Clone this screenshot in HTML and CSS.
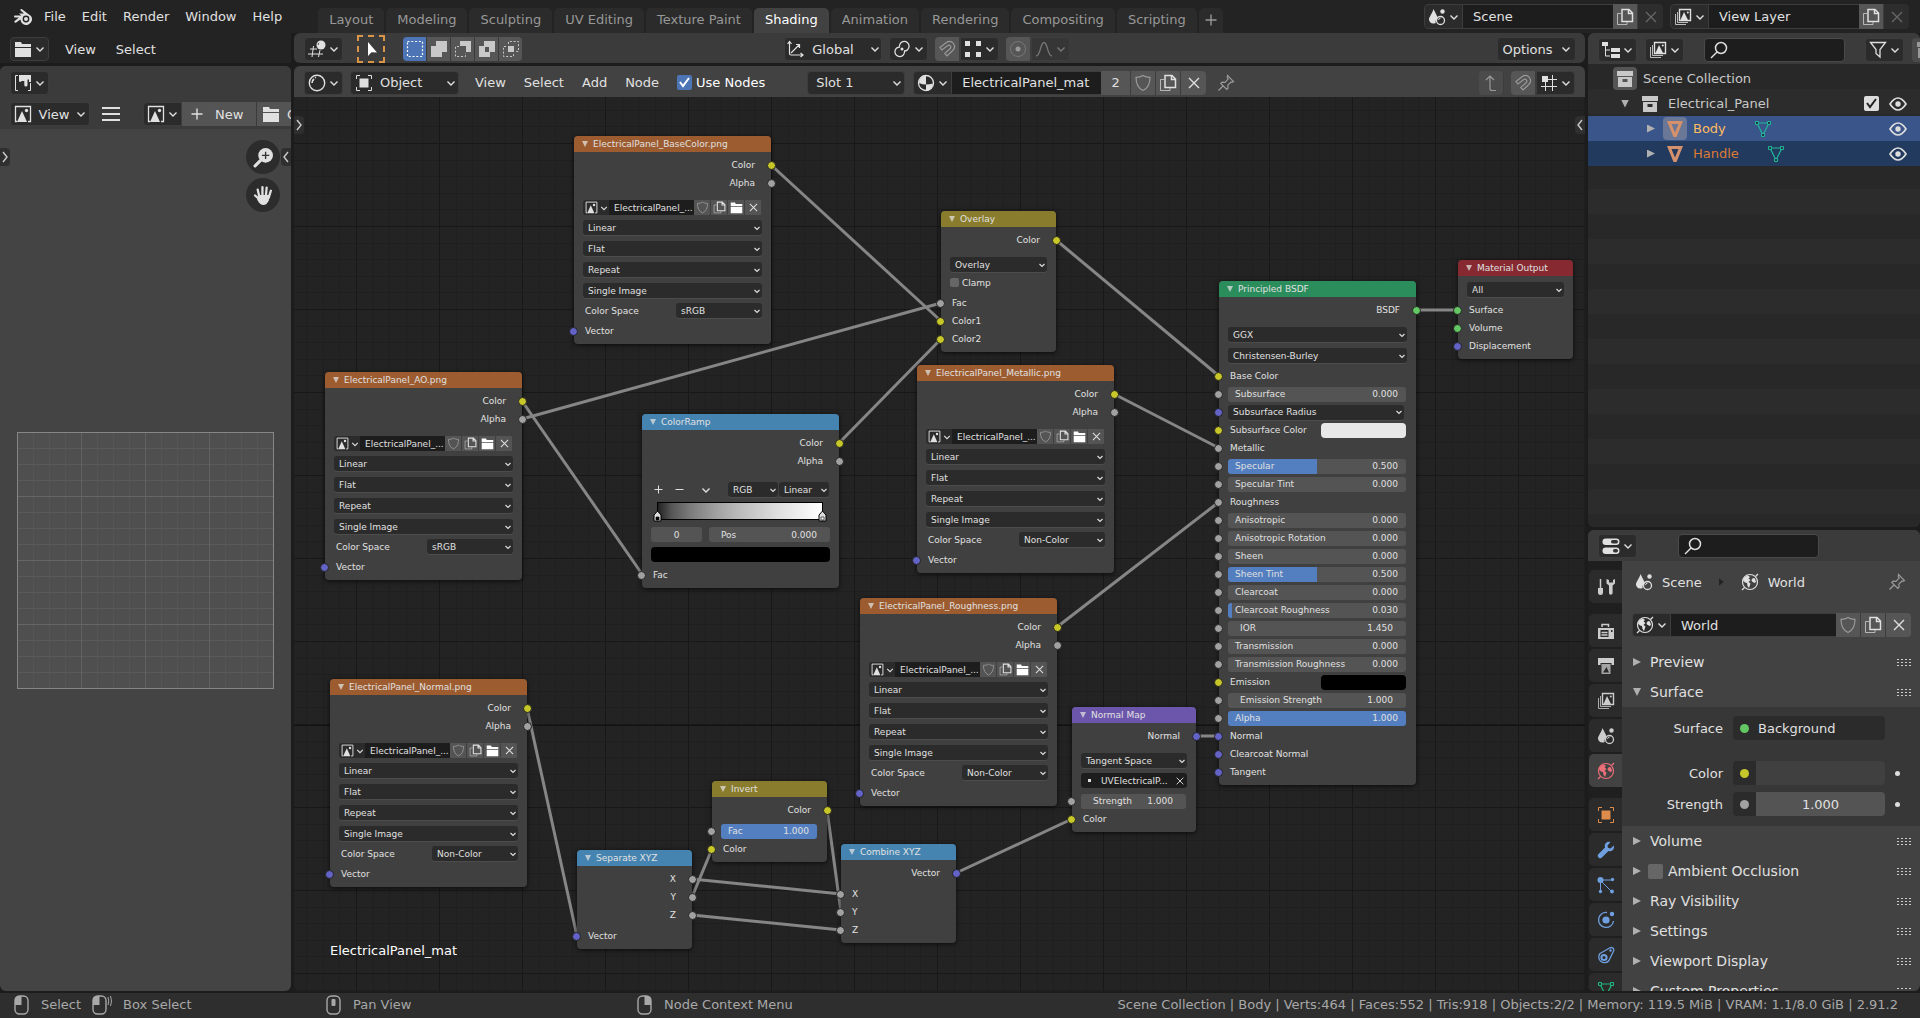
FILE: index.html
```html
<!DOCTYPE html>
<html lang="en">
<head>
    <meta charset="UTF-8">
    <meta name="viewport" content="width=device-width, initial-scale=1.0">
    <title>Blender</title>
    <link rel="stylesheet" href="styles.css">
</head>

<body>
    <!-- Icon set -->
    <svg class="sprite" aria-hidden="true">
        <symbol id="i-logo" viewBox="0 0 20 18"><path d="M9 1.2 18 8a5.800 5.800 0 1 1-10.600 3.500L3.200 14.500c-1.600.8-2.600-.6-1.500-1.600L6 9.500H2.200c-1.600 0-1.600-2 0-2h6.300L5.900 5.400H11L7.800 2.800C6.800 1.800 8 .6 9 1.200z" fill="currentColor"/><circle cx="13" cy="11" r="3.400" fill="#232323"/><circle cx="13" cy="11" r="2" fill="currentColor"/></symbol>
        <symbol id="i-folder" viewBox="0 0 18 18"><path d="M1 2h6l1 2h9v3H1zM1 8h16v9H1z" fill="currentColor"/></symbol>
        <symbol id="i-paint" viewBox="0 0 18 18"><path d="M4 1.500H1.500v15H4M14 16.500h2.500V9" fill="none" stroke="currentColor"/><path d="M5 1h12v7h-2V5.500h-1.500V11a1.600 1.600 0 0 1-3.200 0V7H7.500a1.300 1.300 0 0 1-2.500 0z" fill="currentColor"/></symbol>
        <symbol id="i-image" viewBox="0 0 18 18"><path d="M3 16.500H1.500v-15h15v15H14" fill="none" stroke="currentColor" stroke-width="1.300"/><path d="M3 17 8 6l5 11z" fill="currentColor"/><circle cx="12.500" cy="5.500" r="1.700" fill="currentColor"/></symbol>
        <symbol id="i-menu" viewBox="0 0 18 18"><path d="M0 3h18M0 9h18M0 15h18" stroke="currentColor" stroke-width="2"/></symbol>
        <symbol id="i-plus" viewBox="0 0 18 18"><path d="M9 3.500v11M3.500 9h11" stroke="currentColor" stroke-width="1.400"/></symbol>
        <symbol id="i-minus" viewBox="0 0 18 18"><path d="M3.500 9h11" stroke="currentColor" stroke-width="1.400"/></symbol>
        <symbol id="i-x" viewBox="0 0 18 18"><path d="m4 4 10 10m0-10-10 10" stroke="currentColor" stroke-width="1.400"/></symbol>
        <symbol id="i-chev" viewBox="0 0 10 10"><path d="m1.500 3.500 3.500 3.500 3.500-3.500" fill="none" stroke="currentColor" stroke-width="1.400"/></symbol>
        <symbol id="i-left" viewBox="0 0 10 16"><path d="M7 3 3 8l4 5" fill="none" stroke="currentColor" stroke-width="1.400"/></symbol>
        <symbol id="i-right" viewBox="0 0 10 16"><path d="m3 3 4 5-4 5" fill="none" stroke="currentColor" stroke-width="1.400"/></symbol>
        <symbol id="i-view3d" viewBox="0 0 18 18"><path d="M5.500 6 4 17M12 10l-1.500 7M2 9h7M0 14h15" fill="none" stroke="currentColor"/><circle cx="13" cy="5" r="4.500" fill="currentColor"/><path d="M11 2.800a2.500 2.500 0 0 0-.8 2" stroke="#333" fill="none"/></symbol>
        <symbol id="i-cursor" viewBox="0 0 18 18"><path d="M6 2v14l3.500-3.700 5.500.2z" fill="currentColor"/></symbol>
        <symbol id="i-set" viewBox="0 0 18 18"><path d="M1.500 1.500h15v15h-15z" fill="none" stroke="currentColor" stroke-width="1.200" stroke-dasharray="2 1.800"/></symbol>
        <symbol id="i-extend" viewBox="0 0 18 18"><path d="M6 1h11v11h-5v5H1V6h5z" fill="currentColor"/></symbol>
        <symbol id="i-subtract" viewBox="0 0 18 18"><path d="M6 1h11v11h-5V6H6z" fill="currentColor"/><path d="M5 6.500H1.500v10h10V13" fill="none" stroke="currentColor" stroke-dasharray="2 1.800"/></symbol>
        <symbol id="i-invert" viewBox="0 0 18 18"><path d="M6 1h11v11h-5v5H1V6h5zM7 7v5h4V7z" fill="currentColor" fill-rule="evenodd"/></symbol>
        <symbol id="i-intersect" viewBox="0 0 18 18"><path d="M6 6h6v6H6z" fill="currentColor"/><path d="M6.500 4V1.500h10v10H14M4 6.500H1.500v10h10V14" fill="none" stroke="currentColor" stroke-dasharray="2 1.800"/></symbol>
        <symbol id="i-axes" viewBox="0 0 18 18"><path d="M3.500 1.500v12a1.500 1.500 0 0 0 1.500 1.500h12M1.500 4l2-2.500 2 2.500M14.500 13l2.500 2-2.500 2M5 13l8.500-8.500M10 4.500h3.500V8" fill="none" stroke="currentColor" stroke-width="1.200"/></symbol>
        <symbol id="i-pivot" viewBox="0 0 18 18"><path d="M6.500 6.800A4.800 4.800 0 1 1 11 11M11.500 11.200A4.800 4.800 0 1 1 7 7" fill="none" stroke="currentColor" stroke-width="1.300"/><circle cx="9" cy="9" r="1.500" fill="currentColor"/></symbol>
        <symbol id="i-magnet" viewBox="0 0 18 18"><path d="M2 7.500 8 2.800c6-4 11.500 3.200 6.500 8L9 16l-2.200-2.500 5.200-4.700c2-2-.3-4.700-2.500-3L4 10z" fill="none" stroke="currentColor" stroke-width="1.200"/></symbol>
        <symbol id="i-incr" viewBox="0 0 18 18"><path d="M1 1h5v5H1zM12 1h5v5h-5zM1 12h5v5H1zM12 12h5v5h-5z" fill="currentColor"/></symbol>
        <symbol id="i-prop" viewBox="0 0 18 18"><circle cx="9" cy="9" r="7.500" fill="none" stroke="currentColor" opacity=".5"/><circle cx="9" cy="9" r="2.500" fill="currentColor"/></symbol>
        <symbol id="i-falloff" viewBox="0 0 18 18"><path d="M1 16c5 0 4-13.500 8-13.500S12 16 17 16" fill="none" stroke="currentColor" stroke-width="1.300"/></symbol>
        <symbol id="i-matball" viewBox="0 0 18 18"><circle cx="9" cy="9" r="7.700" fill="none" stroke="currentColor" stroke-width="1.400"/><path d="M4 9a5 5 0 0 1 2-4M7 3.800l1-.4" stroke="currentColor" stroke-width="1.600" fill="none"/></symbol>
        <symbol id="i-object" viewBox="0 0 18 18"><path d="M4.500 4.500h9v9h-9z" fill="currentColor"/><path d="M1.500 5V1.500H5M13 1.500h3.500V5M16.500 13v3.500H13M5 16.500H1.500V13" fill="none" stroke="currentColor"/></symbol>
        <symbol id="i-material" viewBox="0 0 18 18"><circle cx="9" cy="9" r="7.500" fill="none" stroke="currentColor" stroke-width="1.300"/><path d="M9 1.500A7.500 7.500 0 0 0 2 9q3.500 1.500 7 1.500zM9 10.500V17a7.500 7.500 0 0 0 7-7.500q-3 1-7 1z" fill="currentColor"/></symbol>
        <symbol id="i-shield" viewBox="0 0 18 18"><path d="M9 1.500c2 1.400 4.500 1.800 7 1.800 0 6.500-2 11-7 13.200C4 14.300 2 9.800 2 3.300c2.500 0 5-.4 7-1.800z" fill="none" stroke="currentColor" stroke-width="1.200"/></symbol>
        <symbol id="i-copy" viewBox="0 0 18 18"><path d="M5 5.500H1.500v11h9.500V14" fill="none" stroke="currentColor" opacity=".7"/><path d="M6 1.500h7L16.500 5v8.500H6zM12.500 1.500v4h4" fill="none" stroke="currentColor" stroke-width="1.500"/></symbol>
        <symbol id="i-pin" viewBox="0 0 18 18"><path d="m10.500 1.500 6 6-1.500.8-1-.3-3.200 3.200.2 3-1.200 1.200-6-6 1.200-1.200 3 .2L11.200 5l-.9-1.500zM6.500 11.500l-5 5" fill="none" stroke="currentColor" stroke-width="1.200"/></symbol>
        <symbol id="i-up" viewBox="0 0 18 18"><path d="M8 2v12.500a2 2 0 0 0 2 2h4M4 6l4-4 4 4" fill="none" stroke="currentColor" stroke-width="1.200"/></symbol>
        <symbol id="i-snapgrid" viewBox="0 0 18 18"><path d="M5.500 8v9M12.500 1v16M8 5.500h9M1 12.500h16" stroke="currentColor"/><path d="M2 2h6v6H2z" fill="currentColor"/></symbol>
        <symbol id="i-scene" viewBox="0 0 18 18"><path d="M5.500 1 10 10c-2 1-2.800 3-2.300 5C4 16.500 1 14.500 1 11.500 1 9 4.500 5 5.500 1z" fill="currentColor"/><circle cx="14.500" cy="3.500" r="2.200" fill="currentColor"/><circle cx="12.500" cy="12.500" r="4" fill="none" stroke="currentColor" stroke-width="1.300"/><path d="M10.500 12a2 2 0 0 1 2-1.800" stroke="currentColor" fill="none"/></symbol>
        <symbol id="i-layers" viewBox="0 0 18 18"><path d="M5.500 1.500h11v11h-11z" fill="none" stroke="currentColor" stroke-width="1.400"/><path d="m6.500 12 3.500-8 4 8z" fill="currentColor"/><circle cx="13.800" cy="4.500" r="1" fill="currentColor"/><path d="M3.500 4v10.500H14M1.500 6v10.500H12" fill="none" stroke="currentColor" opacity=".8"/></symbol>
        <symbol id="i-outliner" viewBox="0 0 18 18"><path d="M0 1h6v4H0zM9 7h9v4H9zM9 13h9v4H9z" fill="currentColor"/><path d="M3.500 5v10H8M3.500 9H8" fill="none" stroke="currentColor"/></symbol>
        <symbol id="i-search" viewBox="0 0 18 18"><circle cx="11" cy="7" r="5.500" fill="none" stroke="currentColor" stroke-width="1.500"/><path d="m7 11-6 6" stroke="currentColor" stroke-width="1.500"/></symbol>
        <symbol id="i-filter" viewBox="0 0 18 18"><path d="M1.500 1.500h15l-5.500 7V16l-4-3.500v-4z" fill="none" stroke="currentColor" stroke-width="1.300"/></symbol>
        <symbol id="i-collection" viewBox="0 0 18 18"><path d="M1 1h16v5H1z" fill="currentColor"/><path fill-rule="evenodd" d="M2 7h14v10H2zM6.500 9v3h5V9z" fill="currentColor"/></symbol>
        <symbol id="i-eye" viewBox="0 0 18 18"><path d="M1 9q8-12 16 0-8 12-16 0z" fill="none" stroke="currentColor" stroke-width="1.700"/><circle cx="9" cy="9" r="2.700" fill="currentColor"/></symbol>
        <symbol id="i-mesh" viewBox="0 0 18 18"><path fill-rule="evenodd" d="M1 1h16l-6.500 16h-3zM5.500 4 9 12.500 12.500 4z" fill="currentColor"/></symbol>
        <symbol id="i-meshdata" viewBox="0 0 18 18"><path d="M3 3h12L9 15z" fill="none" stroke="currentColor" stroke-width="1.200"/><path d="M1.500 1.500h3v3h-3zM13.500 1.500h3v3h-3zM7.500 13.500h3v3h-3z" fill="#234" stroke="currentColor"/></symbol>
        <symbol id="i-props" viewBox="0 0 18 18"><rect x=".5" y="1.500" width="17" height="6.500" rx="3.200" fill="currentColor"/><rect x=".5" y="10.500" width="17" height="6.500" rx="3.200" fill="currentColor"/><rect x="9" y="3" width="7" height="3.500" rx="1.700" fill="#333"/><rect x="11" y="12" width="5" height="3.500" rx="1.700" fill="#333"/></symbol>
        <symbol id="i-tool" viewBox="0 0 18 18"><path d="M3.500 1v9" stroke="currentColor" stroke-width="1.500"/><path d="M1 10h5v5q0 2-2.500 2T1 15zM9.500 1v4.500l2.500 2V15a1.800 1.800 0 0 0 3.600 0V7.500l2.400-2V1l-2 1v2.500h-4V2z" fill="currentColor"/></symbol>
        <symbol id="i-render" viewBox="0 0 18 18"><path fill-rule="evenodd" d="M1 6h16v11H1zM3.500 8v7h8V8zM14 8v2h1.500V8z" fill="currentColor"/><path d="M5 5V2.500h6.500V5M4.500 10.500h6M4.500 13h6" stroke="currentColor" stroke-width="1.500" fill="none"/></symbol>
        <symbol id="i-output" viewBox="0 0 18 18"><path d="M1 1h16v7h-2.500V6h-11v2H1z" fill="currentColor"/><path fill-rule="evenodd" d="M4.500 7h9v10h-9zM6 15.500h6L9.500 10z" fill="currentColor" opacity=".75"/></symbol>
        <symbol id="i-world" viewBox="0 0 18 18"><circle cx="9" cy="9" r="7.500" fill="none" stroke="currentColor" stroke-width="1.200"/><path d="M14.500 3.500 17 1M1 17l2.500-2.500" stroke="currentColor" stroke-width="1.300"/><path d="M2 7.500C2.500 5 4.500 3 7 2.500L9 4 7.500 5.500 9.500 7 7.500 9l2 1.500L8 15l-1.500-2L6 10 4 9.500zM12 5l2 .5L15 9l-1.500 1L11 8.500 10.500 7z" fill="currentColor"/></symbol>
        <symbol id="i-wrench" viewBox="0 0 18 18"><path d="M16.800 4.500 13.500 7.500 11 6.800 10.500 4.500 13.500 1C9.500 0 6.800 3 8 6.500L1.500 13a2.300 2.300 0 0 0 3.400 3.400L11.500 10c3.500 1.200 6.300-1.800 5.300-5.500z" fill="currentColor"/></symbol>
        <symbol id="i-particles" viewBox="0 0 18 18"><circle cx="3.500" cy="4" r="3" fill="currentColor"/><path d="M4 4h11M4 5l10 10M3.500 5v10" stroke="currentColor"/><circle cx="15.500" cy="3.500" r="1.700" fill="currentColor"/><circle cx="15" cy="15.500" r="1.900" fill="currentColor"/><circle cx="3.500" cy="15.500" r="1.700" fill="currentColor"/></symbol>
        <symbol id="i-physics" viewBox="0 0 18 18"><path d="M10 1.500A7.500 7.500 0 1 0 16.500 10" fill="none" stroke="currentColor" stroke-width="1.300"/><circle cx="9" cy="9" r="3.600" fill="currentColor"/><circle cx="15" cy="3" r="2.200" fill="currentColor"/></symbol>
        <symbol id="i-constraint" viewBox="0 0 18 18"><path d="M3 7.500 13 1.800c2.500-1 4.500 1 3.500 3.500L12 14.500a5.500 5.500 0 1 1-9-7z" fill="none" stroke="currentColor" stroke-width="1.300"/><circle cx="7" cy="11.500" r="2.600" fill="none" stroke="currentColor" stroke-width="2"/><circle cx="13.500" cy="4.500" r="1.200" fill="currentColor"/></symbol>
        <symbol id="i-zoom" viewBox="0 0 20 20"><circle cx="12" cy="8" r="7" fill="currentColor"/><path d="m7 13-5 5" stroke="currentColor" stroke-width="3" stroke-linecap="round"/><path d="M12 4.500v7M8.500 8h7" stroke="#333" stroke-width="1.300"/></symbol>
        <symbol id="i-hand" viewBox="0 0 20 20"><path d="M6 11 4.500 4.500M9 10V2M12.300 10 13 2.500M15 12l2-6.500M6.500 14 2 10" stroke="currentColor" stroke-width="2.200" stroke-linecap="round"/><path d="M5 9.500h10.800L15 15q-2 4-5 4-3.500 0-6-5z" fill="currentColor"/></symbol>
        <symbol id="i-mouse-l" viewBox="0 0 18 20"><rect x="2" y="1" width="13" height="18" rx="4.500" fill="none" stroke="currentColor" stroke-width="1.400"/><path d="M8.500 1v9H2V5q0-4 4-4z" fill="currentColor"/></symbol>
        <symbol id="i-mouse-drag" viewBox="0 0 22 20"><rect x="2" y="1" width="13" height="18" rx="4.500" fill="none" stroke="currentColor" stroke-width="1.400"/><path d="M8.500 1v9H2V5q0-4 4-4z" fill="currentColor"/><path d="M17 2q1.500 4 0 8M19.500 1q2 5 0 10" fill="none" stroke="currentColor"/></symbol>
        <symbol id="i-mouse-m" viewBox="0 0 18 20"><rect x="2" y="1" width="13" height="18" rx="4.500" fill="none" stroke="currentColor" stroke-width="1.400"/><rect x="6.500" y="4" width="4" height="7" rx="1" fill="currentColor"/></symbol>
        <symbol id="i-mouse-r" viewBox="0 0 18 20"><rect x="2" y="1" width="13" height="18" rx="4.500" fill="none" stroke="currentColor" stroke-width="1.400"/><path d="M8.500 1v9H15V5q0-4-4-4z" fill="currentColor"/></symbol>
        <symbol id="i-stop" viewBox="0 0 9 13"><path d="M1 12V6l3.500-4L8 6v6z" fill="#ddd" stroke="#000"/><path d="M3 8h3v3H3z" fill="var(--stop)" stroke="#000" stroke-width=".6"/></symbol>
    </svg>

    <header class="topbar">
        <svg class="logo"><use href="#i-logo"/></svg>
        <nav class="menu">
            <button>File</button><button>Edit</button><button>Render</button><button>Window</button><button>Help</button>
        </nav>
        <nav class="tabs">
            <button>Layout</button><button>Modeling</button><button>Sculpting</button><button>UV Editing</button><button>Texture Paint</button><button class="active">Shading</button><button>Animation</button><button>Rendering</button><button>Compositing</button><button>Scripting</button><button class="add" aria-label="Add workspace"><svg class="icon"><use href="#i-plus"/></svg></button>
        </nav>
        <div class="idblock top-id">
            <button class="drop" aria-label="Browse scene"><svg class="icon"><use href="#i-scene"/></svg><svg class="chev"><use href="#i-chev"/></svg></button>
            <input type="text" aria-label="Scene" value="Scene">
            <button class="sq" aria-label="New scene"><svg class="icon"><use href="#i-copy"/></svg></button>
            <button class="sq off" aria-label="Delete scene"><svg class="icon"><use href="#i-x"/></svg></button>
        </div>
        <div class="idblock top-id">
            <button class="drop" aria-label="Browse view layer"><svg class="icon"><use href="#i-layers"/></svg><svg class="chev"><use href="#i-chev"/></svg></button>
            <input type="text" aria-label="View layer" value="View Layer">
            <button class="sq" aria-label="New view layer"><svg class="icon"><use href="#i-copy"/></svg></button>
            <button class="sq off" aria-label="Remove view layer"><svg class="icon"><use href="#i-x"/></svg></button>
        </div>
    </header>

    <main class="workspace">
        <!-- Left column: file browser header and image editor -->
        <div class="column">
            <div class="bar file-bar">
                <button class="drop" aria-label="Editor type"><svg class="icon"><use href="#i-folder"/></svg><svg class="chev"><use href="#i-chev"/></svg></button>
                <nav class="menu"><button>View</button><button>Select</button></nav>
            </div>
            <section class="area image-editor">
                <div class="bar">
                    <button class="drop" aria-label="Editor type"><svg class="icon"><use href="#i-paint"/></svg><svg class="chev"><use href="#i-chev"/></svg></button>
                </div>
                <div class="bar image-bar">
                    <button class="drop wide"><svg class="icon"><use href="#i-image"/></svg>View<svg class="chev"><use href="#i-chev"/></svg></button>
                    <button class="plain" aria-label="Menu"><svg class="icon"><use href="#i-menu"/></svg></button>
                    <div class="idblock">
                        <button class="drop" aria-label="Browse image"><svg class="icon"><use href="#i-image"/></svg><svg class="chev"><use href="#i-chev"/></svg></button>
                        <button class="new"><svg class="icon"><use href="#i-plus"/></svg>New</button>
                        <button class="new open"><svg class="icon"><use href="#i-folder"/></svg>Open</button>
                    </div>
                </div>
                <div class="image-view">
                    <div class="uv-grid"></div>
                    <button class="edge edge-l" aria-label="Show toolbar"><svg><use href="#i-right"/></svg></button>
                    <button class="edge edge-r" aria-label="Show sidebar"><svg><use href="#i-left"/></svg></button>
                    <div class="gizmos">
                        <button aria-label="Zoom"><svg><use href="#i-zoom"/></svg></button>
                        <button aria-label="Pan"><svg><use href="#i-hand"/></svg></button>
                    </div>
                </div>
            </section>
        </div>

        <!-- Centre: tool header and node editor -->
        <div class="column">
            <div class="bar area tool-bar">
                <button class="drop" aria-label="Editor type"><svg class="icon"><use href="#i-view3d"/></svg><svg class="chev"><use href="#i-chev"/></svg></button>
                <button class="tool-select" aria-label="Select box"><svg class="icon"><use href="#i-cursor"/></svg></button>
                <div class="modes">
                    <button class="on" aria-label="Set"><svg class="icon"><use href="#i-set"/></svg></button><button aria-label="Extend"><svg class="icon"><use href="#i-extend"/></svg></button><button aria-label="Subtract"><svg class="icon"><use href="#i-subtract"/></svg></button><button aria-label="Invert"><svg class="icon"><use href="#i-invert"/></svg></button><button aria-label="Intersect"><svg class="icon"><use href="#i-intersect"/></svg></button>
                </div>
                <div class="transform">
                    <button class="drop orient"><svg class="icon"><use href="#i-axes"/></svg>Global<svg class="chev"><use href="#i-chev"/></svg></button>
                    <button class="drop" aria-label="Pivot"><svg class="icon"><use href="#i-pivot"/></svg><svg class="chev"><use href="#i-chev"/></svg></button>
                    <div class="idblock">
                        <button class="sq dim" aria-label="Snap"><svg class="icon"><use href="#i-magnet"/></svg></button>
                        <button class="drop" aria-label="Snap to"><svg class="icon"><use href="#i-incr"/></svg><svg class="chev"><use href="#i-chev"/></svg></button>
                    </div>
                    <div class="idblock">
                        <button class="sq dim" aria-label="Proportional editing"><svg class="icon"><use href="#i-prop"/></svg></button>
                        <button class="drop faded" aria-label="Falloff"><svg class="icon"><use href="#i-falloff"/></svg><svg class="chev"><use href="#i-chev"/></svg></button>
                    </div>
                </div>
                <button class="drop options">Options<svg class="chev"><use href="#i-chev"/></svg></button>
            </div>
            <section class="area node-editor">
                <div class="bar node-bar">
                    <button class="drop" aria-label="Editor type"><svg class="icon"><use href="#i-matball"/></svg><svg class="chev"><use href="#i-chev"/></svg></button>
                    <button class="drop shader-type"><svg class="icon"><use href="#i-object"/></svg>Object<svg class="chev"><use href="#i-chev"/></svg></button>
                    <nav class="menu"><button>View</button><button>Select</button><button>Add</button><button>Node</button></nav>
                    <label class="use-nodes"><input type="checkbox" checked>Use Nodes</label>
                    <button class="drop slot">Slot 1<svg class="chev"><use href="#i-chev"/></svg></button>
                    <div class="idblock material">
                        <button class="drop" aria-label="Browse material"><svg class="icon"><use href="#i-material"/></svg><svg class="chev"><use href="#i-chev"/></svg></button>
                        <input type="text" aria-label="Material" value="ElectricalPanel_mat">
                        <button class="sq users">2</button>
                        <button class="sq dim" aria-label="Fake user"><svg class="icon"><use href="#i-shield"/></svg></button>
                        <button class="sq" aria-label="New material"><svg class="icon"><use href="#i-copy"/></svg></button>
                        <button class="sq" aria-label="Unlink"><svg class="icon"><use href="#i-x"/></svg></button>
                    </div>
                    <button class="plain dim" aria-label="Pin"><svg class="icon"><use href="#i-pin"/></svg></button>
                    <button class="sq solo push" aria-label="Parent node tree"><svg class="icon"><use href="#i-up"/></svg></button>
                    <div class="idblock">
                        <button class="sq dim" aria-label="Snap"><svg class="icon"><use href="#i-magnet"/></svg></button>
                        <button class="drop" aria-label="Snap element"><svg class="icon"><use href="#i-snapgrid"/></svg><svg class="chev"><use href="#i-chev"/></svg></button>
                    </div>
                </div>
                <div class="canvas">
                    <svg class="links">
                        <path class="axis" d="M0 628.500H2000"/>
                        <path d="M477 68 647 224"/>
                        <path d="M228 322 647 206"/>
                        <path d="M228 304 348 477"/>
                        <path d="M545 346 647 242"/>
                        <path d="M762 143 925 279"/>
                        <path d="M820 297 925 351"/>
                        <path d="M763 530 925 405"/>
                        <path d="M902 639 925 639"/>
                        <path d="M1122 213 1164 213"/>
                        <path d="M233 611 283 839"/>
                        <path d="M398 800 418 752"/>
                        <path d="M533 713 547 815"/>
                        <path d="M398 782 547 797"/>
                        <path d="M398 818 547 833"/>
                        <path d="M662 776 778 722"/>
                    </svg>

                    <article class="node n-basecolor">
                        <h3 class="texture">ElectricalPanel_BaseColor.png</h3>
                        <div class="row out"><i class="dot color"></i>Color</div>
                        <div class="row out"><i class="dot"></i>Alpha</div>
                        <div class="controls">
                            <div class="node-id"><button class="drop" aria-label="Browse image"><svg><use href="#i-image"/></svg><svg class="chev"><use href="#i-chev"/></svg></button><input type="text" aria-label="Image" value="ElectricalPanel_..."><button class="dim" aria-label="Fake user"><svg><use href="#i-shield"/></svg></button><button aria-label="New image"><svg><use href="#i-copy"/></svg></button><button class="lit" aria-label="Open image"><svg><use href="#i-folder"/></svg></button><button aria-label="Unlink"><svg><use href="#i-x"/></svg></button></div>
                            <div class="stack">
                                <select aria-label="Interpolation"><option>Linear</option></select>
                                <select aria-label="Projection"><option>Flat</option></select>
                                <select aria-label="Extension"><option>Repeat</option></select>
                                <select aria-label="Source"><option>Single Image</option></select>
                            </div>
                            <label class="space">Color Space<select><option>sRGB</option></select></label>
                        </div>
                        <div class="row"><i class="dot vector"></i>Vector</div>
                    </article>

                    <article class="node n-ao">
                        <h3 class="texture">ElectricalPanel_AO.png</h3>
                        <div class="row out"><i class="dot color"></i>Color</div>
                        <div class="row out"><i class="dot"></i>Alpha</div>
                        <div class="controls">
                            <div class="node-id"><button class="drop" aria-label="Browse image"><svg><use href="#i-image"/></svg><svg class="chev"><use href="#i-chev"/></svg></button><input type="text" aria-label="Image" value="ElectricalPanel_..."><button class="dim" aria-label="Fake user"><svg><use href="#i-shield"/></svg></button><button aria-label="New image"><svg><use href="#i-copy"/></svg></button><button class="lit" aria-label="Open image"><svg><use href="#i-folder"/></svg></button><button aria-label="Unlink"><svg><use href="#i-x"/></svg></button></div>
                            <div class="stack">
                                <select aria-label="Interpolation"><option>Linear</option></select>
                                <select aria-label="Projection"><option>Flat</option></select>
                                <select aria-label="Extension"><option>Repeat</option></select>
                                <select aria-label="Source"><option>Single Image</option></select>
                            </div>
                            <label class="space">Color Space<select><option>sRGB</option></select></label>
                        </div>
                        <div class="row"><i class="dot vector"></i>Vector</div>
                    </article>

                    <article class="node n-ramp">
                        <h3 class="converter">ColorRamp</h3>
                        <div class="row out"><i class="dot color"></i>Color</div>
                        <div class="row out"><i class="dot"></i>Alpha</div>
                        <div class="controls">
                            <div class="ramp-tools">
                                <button aria-label="Add stop"><svg><use href="#i-plus"/></svg></button>
                                <button aria-label="Delete stop"><svg><use href="#i-minus"/></svg></button>
                                <button aria-label="Ramp tools"><svg class="chev"><use href="#i-chev"/></svg></button>
                                <select aria-label="Color mode"><option>RGB</option></select>
                                <select aria-label="Interpolation"><option>Linear</option></select>
                            </div>
                            <div class="ramp"><svg class="stop first"><use href="#i-stop"/></svg><svg class="stop last"><use href="#i-stop"/></svg></div>
                            <div class="ramp-pos">
                                <input class="index" type="text" aria-label="Active stop" value="0">
                                <label class="num arrows">Pos<input type="text" value="0.000"></label>
                            </div>
                            <input class="swatch black" type="button" aria-label="Stop color">
                        </div>
                        <div class="row"><i class="dot"></i>Fac</div>
                    </article>

                    <article class="node small n-overlay">
                        <h3 class="mix">Overlay</h3>
                        <div class="row out"><i class="dot color"></i>Color</div>
                        <div class="controls close">
                            <select aria-label="Blend mode"><option>Overlay</option></select>
                            <label class="clamp"><input type="checkbox">Clamp</label>
                        </div>
                        <div class="row"><i class="dot"></i>Fac</div>
                        <div class="row"><i class="dot color"></i>Color1</div>
                        <div class="row"><i class="dot color"></i>Color2</div>
                    </article>

                    <article class="node n-metallic">
                        <h3 class="texture">ElectricalPanel_Metallic.png</h3>
                        <div class="row out"><i class="dot color"></i>Color</div>
                        <div class="row out"><i class="dot"></i>Alpha</div>
                        <div class="controls">
                            <div class="node-id"><button class="drop" aria-label="Browse image"><svg><use href="#i-image"/></svg><svg class="chev"><use href="#i-chev"/></svg></button><input type="text" aria-label="Image" value="ElectricalPanel_..."><button class="dim" aria-label="Fake user"><svg><use href="#i-shield"/></svg></button><button aria-label="New image"><svg><use href="#i-copy"/></svg></button><button class="lit" aria-label="Open image"><svg><use href="#i-folder"/></svg></button><button aria-label="Unlink"><svg><use href="#i-x"/></svg></button></div>
                            <div class="stack">
                                <select aria-label="Interpolation"><option>Linear</option></select>
                                <select aria-label="Projection"><option>Flat</option></select>
                                <select aria-label="Extension"><option>Repeat</option></select>
                                <select aria-label="Source"><option>Single Image</option></select>
                            </div>
                            <label class="space">Color Space<select><option>Non-Color</option></select></label>
                        </div>
                        <div class="row"><i class="dot vector"></i>Vector</div>
                    </article>

                    <article class="node n-bsdf">
                        <h3 class="shader">Principled BSDF</h3>
                        <div class="row out"><i class="dot shade"></i>BSDF</div>
                        <div class="controls">
                            <div class="stack">
                                <select aria-label="Distribution"><option>GGX</option></select>
                                <select aria-label="Subsurface method"><option>Christensen-Burley</option></select>
                            </div>
                        </div>
                        <div class="row"><i class="dot color"></i>Base Color</div>
                        <div class="row"><i class="dot"></i><label class="num">Subsurface<input type="text" value="0.000"></label></div>
                        <div class="row"><i class="dot vector"></i><select aria-label="Subsurface Radius"><option>Subsurface Radius</option></select></div>
                        <div class="row"><i class="dot color"></i>Subsurface Color<input class="swatch" type="button" aria-label="Subsurface Color"></div>
                        <div class="row"><i class="dot"></i>Metallic</div>
                        <div class="row"><i class="dot"></i><label class="num" style="--fill:50%">Specular<input type="text" value="0.500"></label></div>
                        <div class="row"><i class="dot"></i><label class="num">Specular Tint<input type="text" value="0.000"></label></div>
                        <div class="row"><i class="dot"></i>Roughness</div>
                        <div class="row"><i class="dot"></i><label class="num">Anisotropic<input type="text" value="0.000"></label></div>
                        <div class="row"><i class="dot"></i><label class="num">Anisotropic Rotation<input type="text" value="0.000"></label></div>
                        <div class="row"><i class="dot"></i><label class="num">Sheen<input type="text" value="0.000"></label></div>
                        <div class="row"><i class="dot"></i><label class="num" style="--fill:50%">Sheen Tint<input type="text" value="0.500"></label></div>
                        <div class="row"><i class="dot"></i><label class="num">Clearcoat<input type="text" value="0.000"></label></div>
                        <div class="row"><i class="dot"></i><label class="num" style="--fill:2%">Clearcoat Roughness<input type="text" value="0.030"></label></div>
                        <div class="row"><i class="dot"></i><label class="num arrows">IOR<input type="text" value="1.450"></label></div>
                        <div class="row"><i class="dot"></i><label class="num">Transmission<input type="text" value="0.000"></label></div>
                        <div class="row"><i class="dot"></i><label class="num">Transmission Roughness<input type="text" value="0.000"></label></div>
                        <div class="row"><i class="dot color"></i>Emission<input class="swatch black" type="button" aria-label="Emission"></div>
                        <div class="row"><i class="dot"></i><label class="num arrows">Emission Strength<input type="text" value="1.000"></label></div>
                        <div class="row"><i class="dot"></i><label class="num" style="--fill:100%">Alpha<input type="text" value="1.000"></label></div>
                        <div class="row"><i class="dot vector"></i>Normal</div>
                        <div class="row"><i class="dot vector"></i>Clearcoat Normal</div>
                        <div class="row"><i class="dot vector"></i>Tangent</div>
                    </article>

                    <article class="node small n-output">
                        <h3 class="output">Material Output</h3>
                        <div class="controls first">
                            <select aria-label="Target"><option>All</option></select>
                        </div>
                        <div class="row"><i class="dot shade"></i>Surface</div>
                        <div class="row"><i class="dot shade"></i>Volume</div>
                        <div class="row"><i class="dot vector"></i>Displacement</div>
                    </article>

                    <article class="node n-roughness">
                        <h3 class="texture">ElectricalPanel_Roughness.png</h3>
                        <div class="row out"><i class="dot color"></i>Color</div>
                        <div class="row out"><i class="dot"></i>Alpha</div>
                        <div class="controls">
                            <div class="node-id"><button class="drop" aria-label="Browse image"><svg><use href="#i-image"/></svg><svg class="chev"><use href="#i-chev"/></svg></button><input type="text" aria-label="Image" value="ElectricalPanel_..."><button class="dim" aria-label="Fake user"><svg><use href="#i-shield"/></svg></button><button aria-label="New image"><svg><use href="#i-copy"/></svg></button><button class="lit" aria-label="Open image"><svg><use href="#i-folder"/></svg></button><button aria-label="Unlink"><svg><use href="#i-x"/></svg></button></div>
                            <div class="stack">
                                <select aria-label="Interpolation"><option>Linear</option></select>
                                <select aria-label="Projection"><option>Flat</option></select>
                                <select aria-label="Extension"><option>Repeat</option></select>
                                <select aria-label="Source"><option>Single Image</option></select>
                            </div>
                            <label class="space">Color Space<select><option>Non-Color</option></select></label>
                        </div>
                        <div class="row"><i class="dot vector"></i>Vector</div>
                    </article>

                    <article class="node n-normal">
                        <h3 class="texture">ElectricalPanel_Normal.png</h3>
                        <div class="row out"><i class="dot color"></i>Color</div>
                        <div class="row out"><i class="dot"></i>Alpha</div>
                        <div class="controls">
                            <div class="node-id"><button class="drop" aria-label="Browse image"><svg><use href="#i-image"/></svg><svg class="chev"><use href="#i-chev"/></svg></button><input type="text" aria-label="Image" value="ElectricalPanel_..."><button class="dim" aria-label="Fake user"><svg><use href="#i-shield"/></svg></button><button aria-label="New image"><svg><use href="#i-copy"/></svg></button><button class="lit" aria-label="Open image"><svg><use href="#i-folder"/></svg></button><button aria-label="Unlink"><svg><use href="#i-x"/></svg></button></div>
                            <div class="stack">
                                <select aria-label="Interpolation"><option>Linear</option></select>
                                <select aria-label="Projection"><option>Flat</option></select>
                                <select aria-label="Extension"><option>Repeat</option></select>
                                <select aria-label="Source"><option>Single Image</option></select>
                            </div>
                            <label class="space">Color Space<select><option>Non-Color</option></select></label>
                        </div>
                        <div class="row"><i class="dot vector"></i>Vector</div>
                    </article>

                    <article class="node small n-separate">
                        <h3 class="converter">Separate XYZ</h3>
                        <div class="row out"><i class="dot"></i>X</div>
                        <div class="row out"><i class="dot"></i>Y</div>
                        <div class="row out last"><i class="dot"></i>Z</div>
                        <div class="row"><i class="dot vector"></i>Vector</div>
                    </article>

                    <article class="node small n-invert">
                        <h3 class="mix">Invert</h3>
                        <div class="row out last"><i class="dot color"></i>Color</div>
                        <div class="row"><i class="dot"></i><label class="num" style="--fill:100%">Fac<input type="text" value="1.000"></label></div>
                        <div class="row"><i class="dot color"></i>Color</div>
                    </article>

                    <article class="node small n-combine">
                        <h3 class="converter">Combine XYZ</h3>
                        <div class="row out last"><i class="dot vector"></i>Vector</div>
                        <div class="row"><i class="dot"></i>X</div>
                        <div class="row"><i class="dot"></i>Y</div>
                        <div class="row"><i class="dot"></i>Z</div>
                    </article>

                    <article class="node n-normalmap">
                        <h3 class="vectorop">Normal Map</h3>
                        <div class="row out"><i class="dot vector"></i>Normal</div>
                        <div class="controls">
                            <select aria-label="Space"><option>Tangent Space</option></select>
                            <div class="uvmap"><span class="bullet"></span><input type="text" aria-label="UV map" value="UVElectricalP..."><button aria-label="Clear"><svg><use href="#i-x"/></svg></button></div>
                        </div>
                        <div class="row"><i class="dot"></i><label class="num arrows">Strength<input type="text" value="1.000"></label></div>
                        <div class="row"><i class="dot color"></i>Color</div>
                    </article>

                    <div class="tree-name">ElectricalPanel_mat</div>
                    <button class="edge edge-l" aria-label="Show toolbar"><svg><use href="#i-right"/></svg></button>
                    <button class="edge edge-r" aria-label="Show sidebar"><svg><use href="#i-left"/></svg></button>
                </div>
            </section>
        </div>

        <!-- Right column: outliner and properties -->
        <div class="column side">
            <section class="area outliner">
                <div class="bar out-bar">
                    <button class="drop" aria-label="Editor type"><svg class="icon"><use href="#i-outliner"/></svg><svg class="chev"><use href="#i-chev"/></svg></button>
                    <button class="drop" aria-label="Display mode"><svg class="icon"><use href="#i-layers"/></svg><svg class="chev"><use href="#i-chev"/></svg></button>
                    <label class="search"><svg class="icon"><use href="#i-search"/></svg><input type="text" aria-label="Filter"></label>
                    <button class="drop" aria-label="Filter options"><svg class="icon"><use href="#i-filter"/></svg><svg class="chev"><use href="#i-chev"/></svg></button>
                    <button class="sq solo" aria-label="New collection"><svg class="icon"><use href="#i-collection"/></svg></button>
                </div>
                <ul class="tree">
                    <li class="lv0"><span class="hl"><svg class="icon"><use href="#i-collection"/></svg></span>Scene Collection</li>
                    <li class="lv1"><i class="tri open"></i><span class="ic"><svg class="icon"><use href="#i-collection"/></svg></span>Electrical_Panel<span class="toggles"><input type="checkbox" aria-label="Enable" checked><svg class="icon"><use href="#i-eye"/></svg></span></li>
                    <li class="lv2 current"><i class="tri"></i><span class="hl"><svg class="icon"><use href="#i-mesh"/></svg></span>Body<svg class="icon data"><use href="#i-meshdata"/></svg><span class="toggles"><svg class="icon"><use href="#i-eye"/></svg></span></li>
                    <li class="lv2 selected"><i class="tri"></i><span class="hl"><svg class="icon"><use href="#i-mesh"/></svg></span>Handle<svg class="icon data"><use href="#i-meshdata"/></svg><span class="toggles"><svg class="icon"><use href="#i-eye"/></svg></span></li>
                </ul>
            </section>
            <section class="area properties">
                <div class="bar prop-bar">
                    <button class="drop" aria-label="Editor type"><svg class="icon"><use href="#i-props"/></svg><svg class="chev"><use href="#i-chev"/></svg></button>
                    <label class="search"><svg class="icon"><use href="#i-search"/></svg><input type="text" aria-label="Search properties"></label>
                </div>
                <div class="prop-main">
                    <nav class="prop-tabs">
                        <button class="end" aria-label="Tool"><svg class="icon"><use href="#i-tool"/></svg></button>
                        <button aria-label="Render"><svg class="icon"><use href="#i-render"/></svg></button>
                        <button aria-label="Output"><svg class="icon"><use href="#i-output"/></svg></button>
                        <button aria-label="View layer"><svg class="icon"><use href="#i-layers"/></svg></button>
                        <button aria-label="Scene"><svg class="icon"><use href="#i-scene"/></svg></button>
                        <button class="end active" aria-label="World"><svg class="icon"><use href="#i-world"/></svg></button>
                        <button class="orange" aria-label="Object"><svg class="icon"><use href="#i-object"/></svg></button>
                        <button class="blue" aria-label="Modifiers"><svg class="icon"><use href="#i-wrench"/></svg></button>
                        <button class="blue" aria-label="Particles"><svg class="icon"><use href="#i-particles"/></svg></button>
                        <button class="blue" aria-label="Physics"><svg class="icon"><use href="#i-physics"/></svg></button>
                        <button class="blue" aria-label="Constraints"><svg class="icon"><use href="#i-constraint"/></svg></button>
                        <button class="green" aria-label="Object data"><svg class="icon"><use href="#i-meshdata"/></svg></button>
                    </nav>
                    <div class="prop-body">
                        <div class="crumbs">
                            <svg class="icon"><use href="#i-scene"/></svg>Scene<i class="tri"></i><svg class="icon"><use href="#i-world"/></svg>World
                            <button class="plain dim push" aria-label="Pin"><svg class="icon"><use href="#i-pin"/></svg></button>
                        </div>
                        <div class="idblock world-id">
                            <button class="drop" aria-label="Browse world"><svg class="icon"><use href="#i-world"/></svg><svg class="chev"><use href="#i-chev"/></svg></button>
                            <input type="text" aria-label="World" value="World">
                            <button class="sq dim" aria-label="Fake user"><svg class="icon"><use href="#i-shield"/></svg></button>
                            <button class="sq" aria-label="New world"><svg class="icon"><use href="#i-copy"/></svg></button>
                            <button class="sq" aria-label="Unlink"><svg class="icon"><use href="#i-x"/></svg></button>
                        </div>
                        <h2><i class="tri"></i>Preview<span class="grip"></span></h2>
                        <h2><i class="tri open"></i>Surface<span class="grip"></span></h2>
                        <div class="panel">
                            <div class="field surface"><span>Surface</span><button class="linked"><i class="dot shade"></i>Background</button></div>
                            <div class="field"><span>Color</span><div class="socketed"><i class="dot color"></i><input type="button" aria-label="Color"></div><i class="anim"></i></div>
                            <div class="field"><label for="strength">Strength</label><div class="socketed"><i class="dot"></i><input type="text" id="strength" value="1.000"></div><i class="anim"></i></div>
                        </div>
                        <h2><i class="tri"></i>Volume<span class="grip"></span></h2>
                        <h2><i class="tri"></i><label><input type="checkbox">Ambient Occlusion</label><span class="grip"></span></h2>
                        <h2><i class="tri"></i>Ray Visibility<span class="grip"></span></h2>
                        <h2><i class="tri"></i>Settings<span class="grip"></span></h2>
                        <h2><i class="tri"></i>Viewport Display<span class="grip"></span></h2>
                        <h2><i class="tri"></i>Custom Properties<span class="grip"></span></h2>
                    </div>
                </div>
            </section>
        </div>
    </main>

    <footer class="statusbar">
        <div><svg><use href="#i-mouse-l"/></svg>Select<svg class="drag"><use href="#i-mouse-drag"/></svg>Box Select</div>
        <div><svg><use href="#i-mouse-m"/></svg>Pan View</div>
        <div><svg><use href="#i-mouse-r"/></svg>Node Context Menu</div>
        <div class="stats">Scene Collection | Body | Verts:464 | Faces:552 | Tris:918 | Objects:2/2 | Memory: 119.5 MiB | VRAM: 1.1/8.0 GiB | 2.91.2</div>
    </footer>
</body>
</html>
```

FILE: styles.css
```css
* {
    box-sizing: border-box;
}

body {
    margin: 0;
    height: 100vh;
    display: flex;
    flex-direction: column;
    overflow: hidden;
    background: #1c1c1c;
    color: #e0e0e0;
    font-family: "DejaVu Sans", sans-serif;
    font-size: 13px;
}

button, input, select {
    font: inherit;
    color: inherit;
    border: 0;
    padding: 0;
    margin: 0;
    background: none;
    min-width: 0;
}

svg {
    display: block;
    flex: none;
}

.sprite {
    position: absolute;
    width: 0;
    height: 0;
}

.icon {
    width: 18px;
    height: 18px;
}

.chev {
    width: 10px;
    height: 10px;
}

/* ---------- shared header widgets ---------- */
.bar {
    display: flex;
    align-items: center;
    flex: none;
    height: 31px;
    padding: 2px 10px 0;
    background: #424242;
}

.area {
    border-radius: 6px;
    overflow: hidden;
}

.drop {
    display: flex;
    align-items: center;
    justify-content: center;
    flex: none;
    gap: 3px;
    width: 39px;
    height: 24px;
    border: 1px solid #3d3d3d;
    border-radius: 4px;
    background: #2b2b2b;
    white-space: nowrap;
}

.menu {
    display: flex;
}

.menu button {
    padding: 0 8px;
}

.idblock {
    display: flex;
    height: 24px;
    border-radius: 4px;
    overflow: hidden;
}

.idblock input {
    flex: 1;
    padding: 0 10px;
    background: #1d1d1d;
    border: solid #3d3d3d;
    border-width: 1px 0;
}

.idblock .drop {
    border-radius: 4px 0 0 4px;
}

.idblock .sq + .drop {
    border-radius: 0 4px 4px 0;
}

.sq {
    display: flex;
    align-items: center;
    justify-content: center;
    flex: none;
    width: 25px;
    height: 24px;
    background: #565656;
    border-right: 1px solid #3d3d3d;
}

.sq:last-child {
    border-right: 0;
}

.sq.solo {
    background: #4b4b4b;
    border-radius: 4px;
    color: #999;
}

.sq.off {
    background: #2d2d2d;
    color: #666;
}

.dim {
    color: #999;
}

.faded {
    color: #777;
    background: #363636;
}

.plain {
    display: flex;
}

.push {
    margin-left: auto;
}

.search {
    display: flex;
    align-items: center;
    width: 141px;
    height: 24px;
    padding-left: 5px;
    border: 1px solid #4a4a4a;
    border-radius: 4px;
    background: #1d1d1d;
}

.search input {
    flex: 1;
}

.tri {
    flex: none;
    width: 8px;
    height: 8px;
    background: #b0b0b0;
    clip-path: polygon(0 0, 100% 50%, 0 100%);
}

.tri.open {
    clip-path: polygon(0 0, 100% 0, 50% 100%);
}

.edge {
    position: absolute;
    top: 19px;
    width: 10px;
    height: 18px;
    background: #2f2f2f;
    color: #ccc;
}

.edge svg {
    width: 10px;
    height: 16px;
}

.edge-l {
    left: 0;
    border-radius: 0 4px 4px 0;
}

.edge-r {
    right: 0;
    border-radius: 4px 0 0 4px;
}

/* ---------- top bar ---------- */
.topbar {
    display: flex;
    align-items: center;
    flex: none;
    height: 33px;
    padding: 0 11px 0 13px;
    background: #232323;
}

.logo {
    width: 20px;
    height: 18px;
    margin-right: 3px;
}

.tabs {
    display: flex;
    align-self: flex-end;
    gap: 2px;
    margin: 0 auto 0 28px;
}

.tabs button {
    height: 25px;
    padding: 0 11px 2px;
    border-radius: 5px 5px 0 0;
    background: #2b2b2b;
    color: #989898;
}

.tabs .active {
    background: #424242;
    color: #fff;
}

.tabs .add {
    padding: 0 3px 2px;
}

.top-id {
    width: 239px;
    height: 25px;
    margin-left: 7px;
}

.top-id .drop, .top-id .sq {
    height: 25px;
}

/* ---------- areas ---------- */
.workspace {
    flex: 1;
    min-height: 0;
    display: grid;
    grid-template-columns: 291px minmax(0, 1fr) 332px;
    gap: 3px;
    padding-bottom: 2px;
}

.column {
    display: flex;
    flex-direction: column;
    gap: 3px;
    min-height: 0;
    min-width: 0;
}

.file-bar {
    height: 30px;
    background: #232323;
}

.file-bar .menu {
    margin-left: 6px;
}

.file-bar .menu button {
    padding: 0 10px;
}

.image-editor {
    flex: 1;
    display: flex;
    flex-direction: column;
    background: #444;
}

.image-editor .bar {
    background: #3b3b3b;
}

.bar.image-bar {
    height: 32px;
    padding-right: 0;
    gap: 12px;
    overflow: hidden;
}

.image-bar .wide {
    width: 80px;
    gap: 7px;
}

/* runs past the narrow editor, the rest is scrolled out of view */
.image-bar .idblock {
    margin-left: 11px;
    flex: none;
}

.image-bar .plain {
    flex: none;
}

.new {
    display: flex;
    align-items: center;
    flex: none;
    gap: 9px;
    width: 75px;
    padding-left: 6px;
    background: #545454;
    border-right: 1px solid #3b3b3b;
}

.open {
    gap: 7px;
    padding-left: 5px;
}

.image-view {
    position: relative;
    flex: 1;
    display: flex;
    align-items: center;
    justify-content: center;
}

.uv-grid {
    width: 257px;
    height: 257px;
    border: 1px solid #868686;
    background:
        repeating-linear-gradient(90deg, transparent 0 63px, #616161 63px 64px),
        repeating-linear-gradient(transparent 0 63px, #666 63px 64px),
        repeating-linear-gradient(90deg, transparent 0 15px, #555 15px 16px),
        repeating-linear-gradient(#4f4f4f 0 15px, #5a5a5a 15px 16px);
}

.gizmos {
    position: absolute;
    top: 11px;
    right: 11px;
    display: grid;
    gap: 4px;
}

.gizmos button {
    display: grid;
    place-items: center;
    width: 34px;
    height: 34px;
    border-radius: 50%;
    background: #2c2c2c;
}

.gizmos svg {
    width: 21px;
    height: 21px;
}

/* ---------- tool header ---------- */
.bar.tool-bar {
    height: 30px;
    background: #3b3b3b;
    padding-right: 9px;
}

.tool-select {
    display: grid;
    place-items: center;
    width: 28px;
    height: 28px;
    margin: 0 18px 0 14px;
    border: 2px dashed #d99548;
    color: #fff;
}

.modes {
    display: flex;
    gap: 1px;
    border-radius: 4px;
    overflow: hidden;
    color: #c8c8c8;
}

.modes button {
    display: grid;
    place-items: center;
    width: 23px;
    height: 24px;
    background: #565656;
}

.modes .on {
    background: #4d75b5;
    color: #fff;
}

.transform {
    display: flex;
    gap: 7px;
    margin: 0 auto 0 262px;
}

.orient {
    width: 98px;
    gap: 8px;
}

.orient .chev {
    margin-left: 8px;
}

.options {
    width: 79px;
    gap: 8px;
}

/* ---------- node editor ---------- */
.node-editor {
    flex: 1;
    display: flex;
    flex-direction: column;
}

.shader-type {
    width: 109px;
    margin: 0 7px;
    gap: 7px;
}

.shader-type .chev, .slot .chev {
    margin-left: auto;
}

.shader-type, .slot {
    padding: 0 2px 0 4px;
}

.node-bar .menu button {
    padding: 0 9px;
}

.use-nodes {
    display: flex;
    align-items: center;
    gap: 4px;
    margin: 0 42px 0 9px;
    color: #fff;
}

input[type="checkbox"] {
    appearance: none;
    flex: none;
    width: 15px;
    height: 15px;
    border-radius: 2px;
    background: #666;
}

input[type="checkbox"]:checked {
    background: #4d75b5 url("data:image/svg+xml,%3Csvg xmlns='http://www.w3.org/2000/svg' viewBox='0 0 15 15'%3E%3Cpath d='m3 7 3 4 6-8' fill='none' stroke='white' stroke-width='2'/%3E%3C/svg%3E");
}

.slot {
    width: 98px;
    padding-left: 8px;
    margin-right: 8px;
}

.material {
    width: 293px;
    margin-right: 11px;
}

.material .users {
    width: 30px;
}

.node-bar .push {
    margin-right: 7px;
}

.canvas {
    position: relative;
    flex: 1;
    overflow: hidden;
    background:
        linear-gradient(90deg, #181818 1px, transparent 1px) 62px 46px / 83px 83px,
        linear-gradient(#181818 1px, transparent 1px) 62px 46px / 83px 83px,
        linear-gradient(90deg, transparent 17px, #1f1f1f 17px 18px, transparent 18px 33px, #1f1f1f 33px 34px, transparent 34px 50px, #1f1f1f 50px 51px, transparent 51px 66px, #1f1f1f 66px 67px, transparent 67px) 62px 46px / 83px 83px,
        linear-gradient(#232323 17px, #1f1f1f 17px 18px, #232323 18px 33px, #1f1f1f 33px 34px, #232323 34px 50px, #1f1f1f 50px 51px, #232323 51px 66px, #1f1f1f 66px 67px, #232323 67px) 62px 46px / 83px 83px;
}

.links {
    position: absolute;
    inset: 0;
    width: 100%;
    height: 100%;
}

.links path {
    fill: none;
    stroke: #868686;
    stroke-width: 3;
}

.links .axis {
    stroke: #131313;
    stroke-width: 1;
}

.node {
    position: absolute;
    width: 197px;
    padding-bottom: 4px;
    border-radius: 4px;
    background: #404040;
    box-shadow: 0 1px 5px rgba(0, 0, 0, .7);
    font-size: 9px;
}

.node.small {
    width: 115px;
}

.node h3 {
    display: flex;
    align-items: center;
    gap: 5px;
    height: 16px;
    margin: 0 0 4px;
    padding-left: 8px;
    border-radius: 4px 4px 0 0;
    font-size: 9px;
    font-weight: normal;
}

.node h3::before {
    content: "";
    width: 6px;
    height: 6px;
    background: currentColor;
    opacity: .75;
    clip-path: polygon(0 0, 100% 0, 50% 100%);
}

.texture { background: #9d5c2f; }
.converter { background: #4584b0; }
.mix { background: #897c2c; }
.shader { background: #2b8c5c; }
.output { background: #862931; }
.vectorop { background: #6c56ac; }

/* node positions on the canvas */
.n-basecolor { left: 280px; top: 39px; }
.n-ao { left: 31px; top: 275px; }
.n-ramp { left: 348px; top: 317px; }
.n-overlay { left: 647px; top: 114px; }
.n-metallic { left: 623px; top: 268px; }
.n-bsdf { left: 925px; top: 184px; }
.n-output { left: 1164px; top: 163px; }
.n-roughness { left: 566px; top: 501px; }
.n-normal { left: 36px; top: 582px; }
.n-separate { left: 283px; top: 753px; }
.n-invert { left: 418px; top: 684px; }
.n-combine { left: 547px; top: 747px; }
.node.n-normalmap { left: 778px; top: 610px; width: 124px; }

.row {
    position: relative;
    display: flex;
    align-items: center;
    height: 18px;
    padding: 0 10px 0 11px;
    white-space: nowrap;
}

.row.out {
    justify-content: flex-end;
    padding-right: 16px;
}

.row.out.last {
    margin-bottom: 3px;
}

.dot {
    flex: none;
    width: 9px;
    height: 9px;
    border: 1px solid #222;
    border-radius: 50%;
    background: #a1a1a1;
}

.dot.color { background: #c7c729; }
.dot.vector { background: #6363c7; }
.dot.shade { background: #63c763; }

.row .dot {
    position: absolute;
    left: -5px;
}

.row.out .dot {
    left: auto;
    right: -5px;
}

.controls {
    display: grid;
    grid-template-columns: minmax(0, 1fr);
    gap: 5px;
    padding: 8px 9px 4px;
}

.controls.close {
    gap: 3px;
}

.controls.first {
    padding-top: 2px;
}

.stack {
    display: grid;
    gap: 6px;
}

select {
    appearance: none;
    width: 100%;
    height: 15px;
    padding: 0 5px;
    border-radius: 3px;
    background: #2b2b2b url("data:image/svg+xml,%3Csvg xmlns='http://www.w3.org/2000/svg' viewBox='0 0 8 8'%3E%3Cpath d='m1.500 3 2.500 2.500L6.500 3' fill='none' stroke='%23ddd' stroke-width='1.200'/%3E%3C/svg%3E") no-repeat right 1px center / 8px 8px;
    box-shadow: 0 1px 0 #4c4c4c;
}

.row select, .num {
    margin: 0 0 0 -2px;
}

.space {
    display: flex;
    align-items: center;
    justify-content: space-between;
    padding-left: 2px;
}

.space select {
    width: 86px;
}

.node-id {
    display: flex;
    height: 15px;
    border-radius: 3px;
    overflow: hidden;
}

.node-id button {
    display: grid;
    place-items: center;
    width: 17px;
    background: #545454;
    border-right: 1px solid #404040;
}

.node-id button.lit {
    color: #fff;
}

.node-id svg {
    width: 13px;
    height: 13px;
}

.node-id .drop {
    display: flex;
    gap: 2px;
    width: 26px;
    height: 15px;
    border: 0;
    border-radius: 0;
    background: #2b2b2b;
}

.node-id .chev {
    width: 8px;
    height: 8px;
}

.node-id input {
    flex: 1;
    padding: 0 0 0 5px;
    background: #1d1d1d;
}

.num {
    --fill: 0%;
    flex: 1;
    display: flex;
    align-items: center;
    justify-content: space-between;
    height: 15px;
    padding: 0 8px 0 7px;
    border-radius: 3px;
    background: linear-gradient(90deg, #537fc1 var(--fill), #545454 var(--fill));
    min-width: 0;
}

.num input {
    width: 36px;
    text-align: right;
}

.num.arrows {
    padding: 0 13px 0 12px;
}

.swatch {
    height: 15px;
    width: 85px;
    margin-left: auto;
    border-radius: 4px;
    background: #e7e7e7;
}

.swatch.black {
    background: #000;
}

.controls .swatch {
    width: 100%;
}

.ramp-tools {
    display: flex;
    align-items: center;
    margin: 4px 0 0 -3px;
}

.ramp-tools button {
    display: grid;
    place-items: center;
    width: 21px;
    height: 15px;
}

.ramp-tools button + button + button {
    margin: 0 12px 0 5px;
}

.ramp-tools svg {
    width: 13px;
    height: 13px;
}

.ramp-tools .chev {
    width: 10px;
    height: 10px;
}

.ramp-tools select {
    flex: 1;
    margin-right: 1px;
}

.ramp {
    position: relative;
    height: 18px;
    margin: 0 7px 2px 6px;
    border: 1px solid #000;
    background: linear-gradient(90deg, #222, #555 8%, #7c7c7c 20%, #a0a0a0 35%, #bcbcbc 50%, #e1e1e1 75%, #fff);
}

.stop {
    position: absolute;
    bottom: -3px;
    width: 9px;
    height: 13px;
}

.first { --stop: #000; }
.last { --stop: #fff; }

.stop.first {
    left: -5px;
}

.stop.last {
    right: -5px;
}

.ramp-pos {
    display: flex;
    gap: 9px;
}

.ramp-pos .index {
    width: 51px;
    border-radius: 3px;
    background: #545454;
    text-align: center;
}

.clamp {
    display: flex;
    align-items: center;
    gap: 3px;
    height: 15px;
}

.clamp input[type="checkbox"] {
    width: 9px;
    height: 9px;
}

.uvmap {
    display: flex;
    align-items: center;
    height: 15px;
    padding-left: 7px;
    border-radius: 3px;
    background: #1d1d1d;
}

.bullet {
    flex: none;
    width: 3px;
    height: 3px;
    background: #ddd;
}

.uvmap input {
    flex: 1;
    padding-left: 10px;
}

.uvmap svg {
    width: 14px;
    height: 12px;
}

.tree-name {
    position: absolute;
    left: 36px;
    bottom: 33px;
    color: #fff;
}

/* ---------- outliner ---------- */
.outliner {
    flex: none;
    height: 494px;
    background: #282828;
}

.bar.out-bar {
    background: #3b3b3b;
    padding-right: 0;
    overflow: hidden;
}

.out-bar .drop {
    margin-right: 8px;
}

.out-bar .search {
    margin: 0 20px 0 12px;
}

.tree {
    height: 100%;
    margin: 0;
    padding: 2px 0 0;
    list-style: none;
    background: repeating-linear-gradient(#282828 0 25px, #2c2c2c 25px 50px);
}

.tree li {
    display: flex;
    align-items: center;
    height: 25px;
    padding-right: 13px;
    color: #c8c8c8;
}

.tree .lv0 { padding-left: 25px; }
.tree .lv1 { padding-left: 33px; }
.tree .lv2 { padding-left: 59px; }

.hl, .ic {
    display: grid;
    place-items: center;
    width: 24px;
    height: 23px;
    margin-right: 6px;
    border-radius: 4px;
}

.lv0 .hl {
    background: #555;
}

.ic {
    margin-left: 9px;
}

.tree .tri + .hl {
    margin-left: 8px;
    color: #d4916b;
}

.tree .current {
    background: #3a5589;
    color: #ffbc60;
}

.tree .current .hl {
    background: #6a7796;
}

.tree .selected {
    background: #223a5e;
    color: #dc7a35;
}

.data {
    margin-left: 28px;
    color: #1fb89a;
}

.toggles {
    display: flex;
    align-items: center;
    gap: 10px;
    margin-left: auto;
    color: #ddd;
}

.tree input[type="checkbox"]:checked {
    background: #ddd url("data:image/svg+xml,%3Csvg xmlns='http://www.w3.org/2000/svg' viewBox='0 0 15 15'%3E%3Cpath d='m3 7 3 4 6-8' fill='none' stroke='%23222' stroke-width='2'/%3E%3C/svg%3E");
}

/* ---------- properties ---------- */
.properties {
    flex: 1;
    min-height: 0;
    display: flex;
    flex-direction: column;
    background: #424242;
}

.bar.prop-bar {
    padding-top: 0;
    background: #3b3b3b;
    gap: 41px;
}

.prop-main {
    flex: 1;
    display: flex;
    min-height: 0;
}

.prop-tabs {
    width: 34px;
    padding: 9px 0 0 1px;
    background: #1f1f1f;
    overflow: hidden;
}

.prop-tabs button {
    display: grid;
    place-items: center;
    width: 33px;
    height: 33px;
    margin-bottom: 2px;
    border-radius: 5px 0 0 5px;
    background: #2b2b2b;
    color: #ccc;
}

.prop-tabs .end {
    margin-bottom: 11px;
}

.prop-tabs .active {
    background: #424242;
    color: #ec6f7a;
}

.prop-tabs .orange { color: #dd8c4b; }
.prop-tabs .blue { color: #6f9fdf; }
.prop-tabs .green { color: #1fb87c; }

.prop-body {
    flex: 1;
    min-width: 0;
    overflow: hidden;
}

.crumbs {
    display: flex;
    align-items: center;
    gap: 9px;
    height: 42px;
    padding: 0 14px 0 13px;
}

.crumbs .tri {
    margin: 0 8px;
    width: 5px;
    background: #222;
}

.world-id {
    margin: 10px 9px 10px 10px;
}

.prop-body h2 {
    display: flex;
    align-items: center;
    height: 30px;
    margin: 0;
    padding: 0 9px 0 11px;
    gap: 9px;
    font-size: 14px;
    font-weight: normal;
}

.prop-body h2 label {
    display: flex;
    align-items: center;
    gap: 5px;
    margin-left: -2px;
}

.grip {
    width: 15px;
    height: 8px;
    margin-left: auto;
    background: radial-gradient(circle, #ccc 1px, transparent 1px) 0 0 / 4px 3px;
}

.panel {
    display: grid;
    gap: 6px;
    height: 119px;
    padding: 9px 0;
    background: #373737;
}

.field {
    display: grid;
    grid-template-columns: 101px 152px 1fr;
    gap: 10px;
    align-items: center;
    height: 24px;
}

.field.surface {
    margin-bottom: 14px;
}

.field > :first-child {
    text-align: right;
}

.linked, .socketed {
    display: flex;
    align-items: center;
    height: 24px;
    padding-left: 7px;
    gap: 9px;
    border-radius: 4px;
    background: #2b2b2b;
    overflow: hidden;
}

.field .dot {
    border: 0;
}

.socketed {
    gap: 7px;
}

.socketed input {
    flex: 1;
    height: 24px;
    background: #404040;
    text-align: center;
}

.socketed input[type="text"] {
    background: #545454;
}

.anim {
    width: 5px;
    height: 5px;
    border-radius: 50%;
    background: #ddd;
}

/* ---------- status bar ---------- */
.statusbar {
    display: grid;
    grid-template-columns: 312px 311px auto 1fr;
    align-items: center;
    flex: none;
    height: 25px;
    padding: 0 22px 2px 13px;
    background: #2e2e2e;
    color: #a8a8a8;
}

.statusbar div {
    display: flex;
    align-items: center;
    gap: 10px;
    white-space: nowrap;
}

.statusbar svg {
    width: 18px;
    height: 20px;
}

.statusbar .drag {
    width: 22px;
}

.statusbar .stats {
    justify-content: flex-end;
}
```
